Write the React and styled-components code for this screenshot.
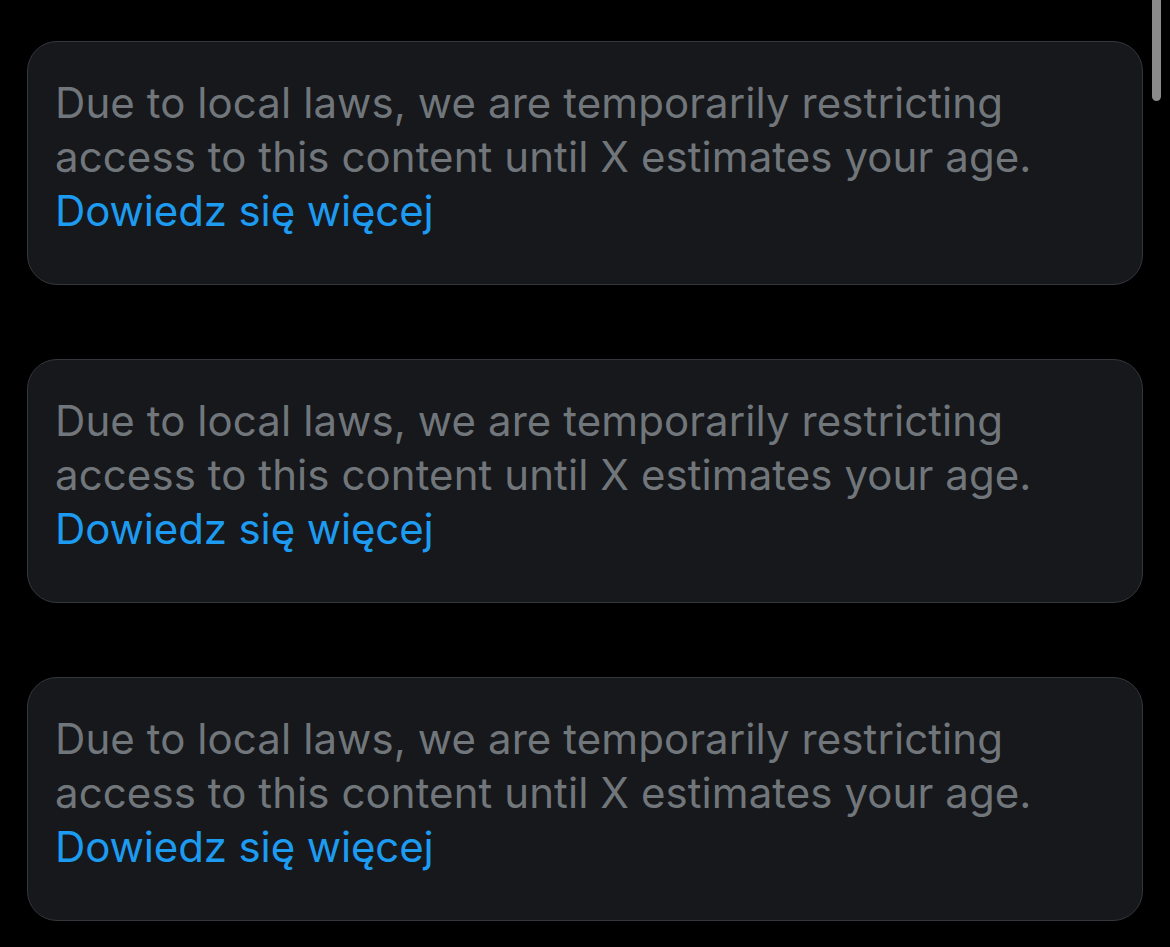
import React from 'react';
import styled, { createGlobalStyle } from 'styled-components';

const notices = [1, 2, 3];

const App = () => {
    return (
        <React.Fragment>
            <GlobalStyle />
            <Page>
                <List>
                    {notices.map((n) => (
                        <Notice key={n}>
                            <Message>
                                Due to local laws, we are temporarily restricting
                                access to this content until X estimates your age.
                            </Message>
                            <MoreLink href="#">Dowiedz się więcej</MoreLink>
                        </Notice>
                    ))}
                </List>
                <Scrollbar />
            </Page>
        </React.Fragment>
    );
};

const GlobalStyle = createGlobalStyle`
    html, body {
        margin: 0;
        padding: 0;
        background: #000000;
    }
    body {
        font-family: Inter, "Noto Sans", "Liberation Sans", sans-serif;
        -webkit-font-smoothing: antialiased;
    }
`;

const Page = styled.div`
    position: relative;
    width: 1170px;
    height: 947px;
    overflow: hidden;
    background: #000000;
`;

const List = styled.div`
    display: flex;
    flex-direction: column;
    gap: 74px;
    padding: 41px 27px 0 27px;
`;

const Notice = styled.div`
    box-sizing: border-box;
    height: 244px;
    background-color: #16181c;
    border: 1.5px solid #34373b;
    border-radius: 30px;
    padding: 34px 28px 0 27px;
`;

const Message = styled.p`
    margin: 0;
    max-width: 1010px;
    font-size: 42px;
    line-height: 54px;
    color: #71767b;
    letter-spacing: 0.08px;
`;

const MoreLink = styled.a`
    display: block;
    font-size: 42px;
    line-height: 54px;
    color: #1d9bf0;
    text-decoration: none;
    letter-spacing: -0.12px;
`;

const Scrollbar = styled.div`
    position: absolute;
    top: 0;
    right: 9px;
    width: 9px;
    height: 101px;
    border-radius: 0 0 5px 5px;
    background: #8a8a8a;
`;

export default App;
